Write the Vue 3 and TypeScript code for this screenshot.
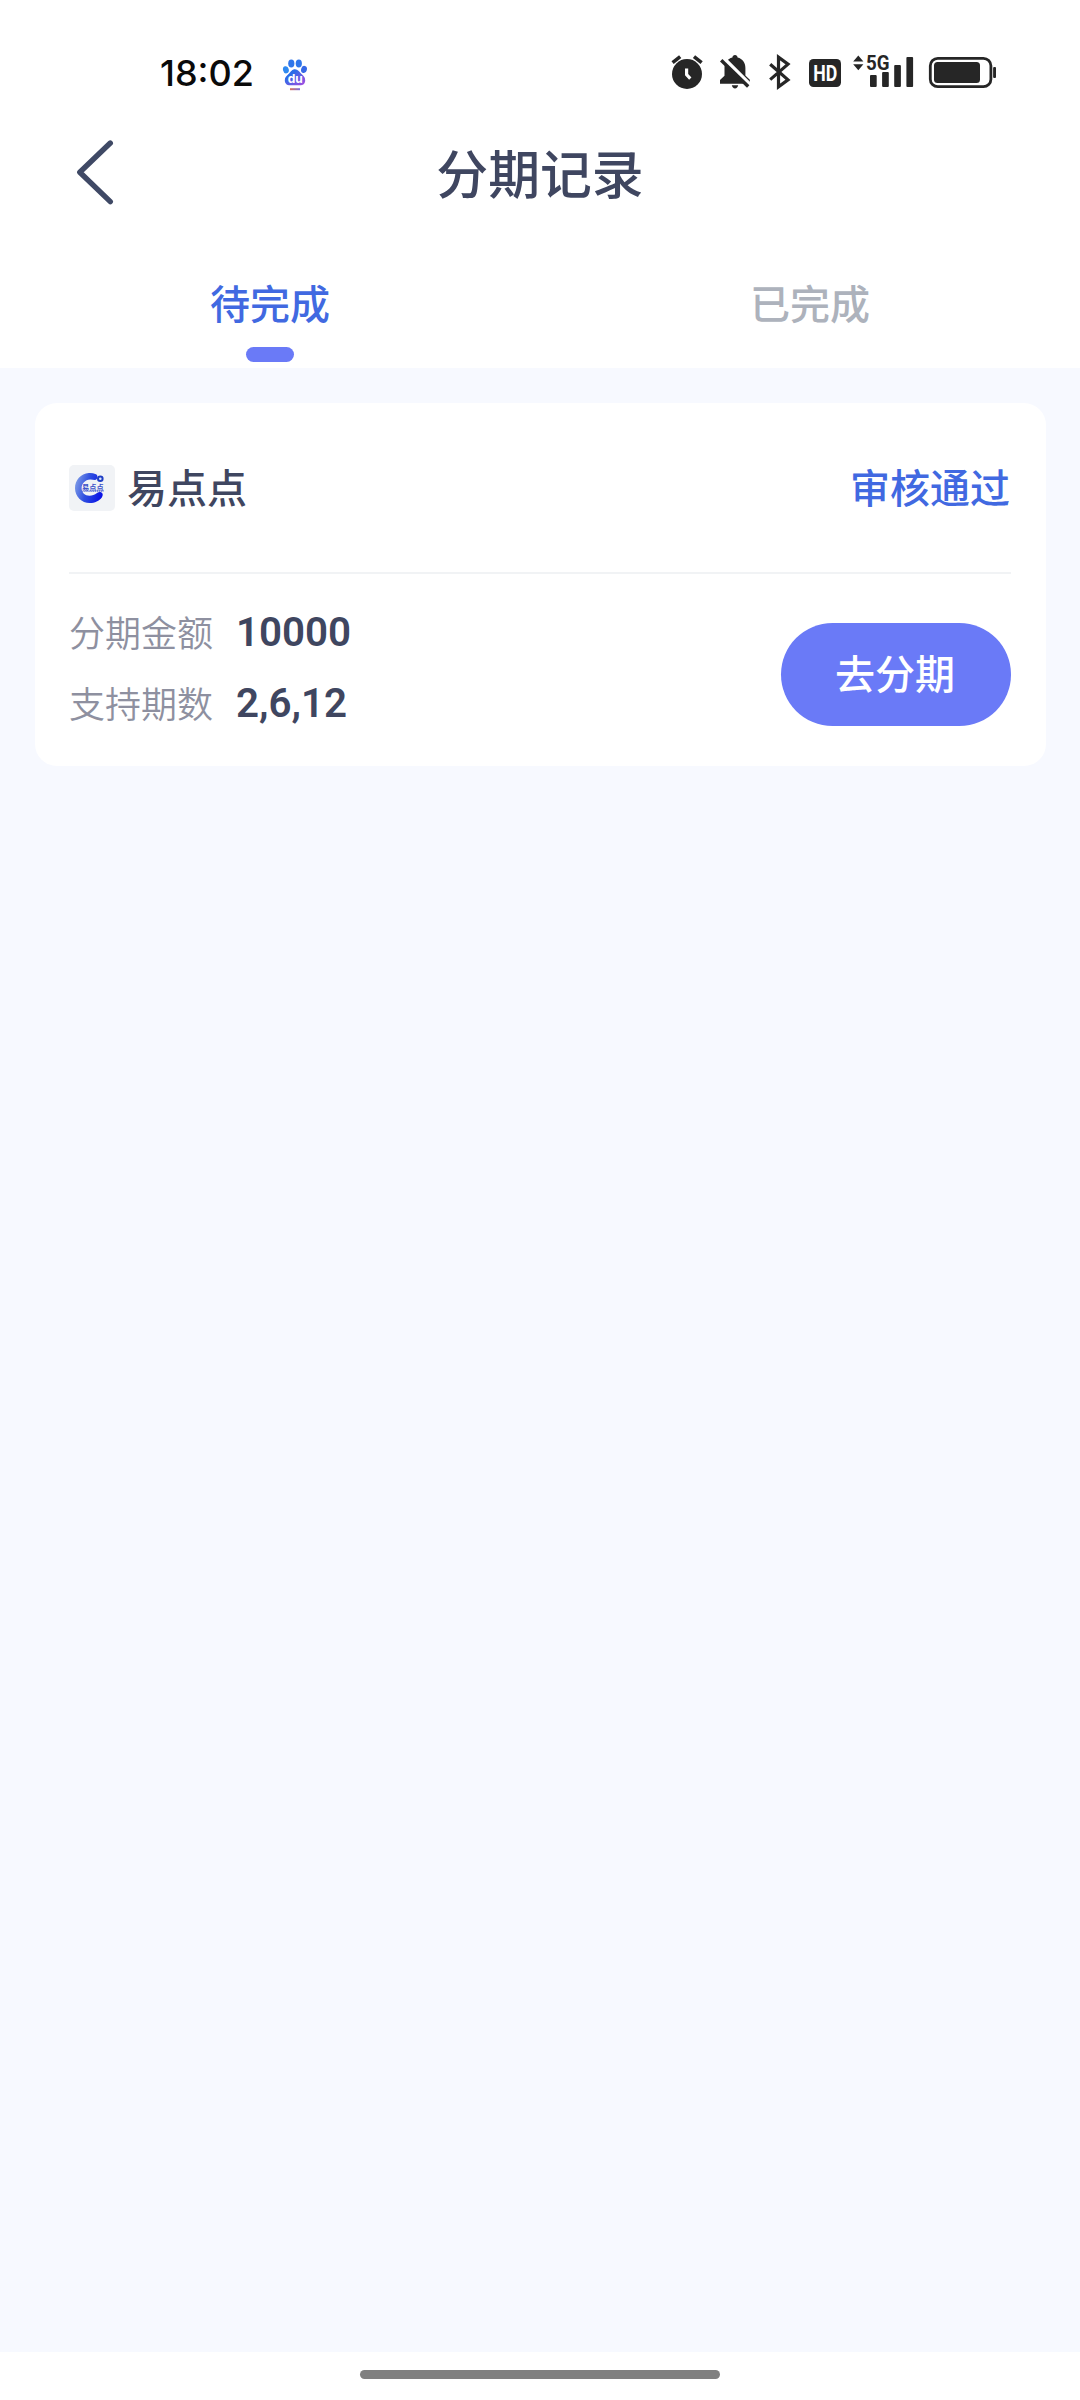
<script setup lang="ts">
import { ref } from 'vue'

interface InstallmentRecord {
  name: string
  status: string
  amount: string
  periods: string
}

const tabs: string[] = ['待完成', '已完成']
const active = ref<number>(0)
const records: InstallmentRecord[] = [
  { name: '易点点', status: '审核通过', amount: '10000', periods: '2,6,12' },
]
</script>

<template>
  <div class="screen">
    <div class="status-bar">
      <span class="clock">18:02</span>
      <svg class="paw" width="26" height="34" viewBox="282 58 26 34">
        <defs>
          <linearGradient id="pawFill" x1="0" y1="0" x2="1" y2="1">
            <stop offset="0.3" stop-color="#2b6ce8" />
            <stop offset="1" stop-color="#a94be0" />
          </linearGradient>
          <linearGradient id="pawLine" x1="0" y1="0" x2="1" y2="0">
            <stop offset="0" stop-color="#d8705c" />
            <stop offset="1" stop-color="#7a6fe0" />
          </linearGradient>
        </defs>
        <ellipse cx="291.3" cy="63.5" rx="3.100" ry="3.900" fill="#2f76ea" />
        <ellipse cx="298.8" cy="63.5" rx="3.100" ry="3.900" fill="#2f76ea" />
        <ellipse cx="285.9" cy="69.8" rx="2.900" ry="3.600" fill="#2f8af0" transform="rotate(-15 285.9 69.8)" />
        <ellipse cx="304" cy="69.4" rx="2.900" ry="3.600" fill="#3568e6" transform="rotate(15 304 69.4)" />
        <path d="M295 69.2c3 0 4.200 2.300 6 4.300 2.300 2.200 4.200 3.500 4.200 6.700 0 3.600-2.300 5.100-5.200 5.100H290c-3 0-5.200-1.700-5.200-5.100 0-3.200 2.200-4.500 4.300-6.700 1.900-2 2.900-4.300 5.900-4.300z" fill="url(#pawFill)" />
        <text x="295.2" y="83" text-anchor="middle" class="paw-text">du</text>
        <rect x="290" y="88.200" width="10" height="2" fill="url(#pawLine)" />
      </svg>
      <div class="indicators">
        <svg width="32" height="36" viewBox="671 54 32 36">
          <circle cx="687" cy="74" r="15" fill="#262626" />
          <path d="M672.600 62.600l7.600-6M701.600 62.600l-7.600-6" stroke="#262626" stroke-width="3.600" />
          <path d="M686.600 68.500v6.200l3.700 3.900" stroke="#fff" stroke-width="3.200" fill="none" />
        </svg>
        <svg width="32" height="36" viewBox="719 54 32 36">
          <path d="M735 55c1.500 0 2.500 1 2.600 2.500 5 1.300 7.800 5.300 7.800 10.500v7.500l4.400 4.300v4H720v-3.800l4.500-4.300V68c0-5.200 2.900-9.200 7.900-10.500.1-1.500 1.100-2.500 2.600-2.500z" fill="#262626" />
          <path d="M731.800 85.200h6.400c-.4 2-1.600 3.200-3.200 3.200s-2.800-1.200-3.200-3.200z" fill="#262626" />
          <path d="M723.500 58.200l27 27" stroke="#fff" stroke-width="4" />
          <path d="M721.200 60.300l27 26.200" stroke="#262626" stroke-width="3.400" />
        </svg>
        <svg width="24" height="36" viewBox="768 54 24 36">
          <path d="M770.200 64.200L788 79.800l-9.500 7V57.200l9.500 7L770.200 79.600" fill="none" stroke="#262626" stroke-width="3.200" />
        </svg>
        <svg width="34" height="36" viewBox="808 54 34 36">
          <rect x="809" y="59" width="32" height="28" rx="4.500" fill="#262626" />
          <text x="825.200" y="81" text-anchor="middle" class="hd-text" textLength="24" lengthAdjust="spacingAndGlyphs">HD</text>
        </svg>
        <svg width="62" height="36" viewBox="853 54 62 36">
          <path d="M853.200 61.500l5.100-6 5.100 6zM853.200 64.300l5.100 6 5.100-6z" fill="#262626" />
          <text x="866" y="70.200" class="net-text" textLength="23.500" lengthAdjust="spacingAndGlyphs">5G</text>
          <rect x="870" y="75" width="6.700" height="12" rx="1" fill="#262626" />
          <rect x="882.100" y="72" width="6.700" height="15" rx="1" fill="#262626" />
          <rect x="894.200" y="65" width="6.700" height="22" rx="1" fill="#262626" />
          <rect x="906.400" y="57" width="6.700" height="30" rx="1" fill="#262626" />
        </svg>
        <svg width="68" height="36" viewBox="929 54 68 36">
          <rect x="930.300" y="58.300" width="60.600" height="28.400" rx="7.500" fill="none" stroke="#262626" stroke-width="2.800" />
          <rect x="934" y="62" width="46" height="21" rx="3.500" fill="#262626" />
          <rect x="993.100" y="67" width="2.900" height="11" rx="1" fill="#262626" />
        </svg>
      </div>
    </div>

    <header class="nav">
      <svg class="back" width="40" height="70" viewBox="75 137 40 70">
        <path d="M110.300 143L79.800 172.300 110.300 201.600" fill="none" stroke="#3f4965" stroke-width="5.400" stroke-linecap="round" stroke-linejoin="round" />
      </svg>
      <h1 class="title">分期记录</h1>
    </header>

    <nav class="tabs">
      <div v-for="(tab, i) in tabs" :key="tab" class="tab" :class="{ active: i === active }" @click="active = i">
        <span class="tab-label">{{ tab }}</span>
        <i class="tab-mark"></i>
      </div>
    </nav>

    <main class="content">
      <section v-for="item in records" :key="item.name" class="card">
        <div class="card-head">
          <svg class="logo" width="46" height="46" viewBox="0 0 46 46">
            <defs>
              <linearGradient id="ringFill" x1="0" y1="0.300" x2="1" y2="0.600">
                <stop offset="0" stop-color="#7d9be6" />
                <stop offset="0.450" stop-color="#2f4fe0" />
                <stop offset="1" stop-color="#0a12e6" />
              </linearGradient>
            </defs>
            <rect width="46" height="46" rx="5" fill="#f1f3f6" />
            <path d="M27 9.200C24.500 8.200 22 7.900 19.800 8.100 11.800 8.600 6 15.200 6 23.200 6 31.600 12.600 38 20.800 38c5 0 9.500-2 12-5.500 1.500-2.200 1.200-4.500-.8-5.200-1.300-.5-2.800 0-4 .8-2.500 1.800-4.700 2.600-7.500 2.600-4.500 0-7.900-3.100-7.900-7.500 0-4.600 3.600-8.400 8.400-8.700 1.500-.1 3 .2 4.800.5 2.700.3 3.700-4.700 1.200-5.800z" fill="url(#ringFill)" />
            <circle cx="31.300" cy="13.800" r="2.300" fill="#dbe4fb" stroke="#1f3fc4" stroke-width="2" />
            <text x="13" y="24.800" class="logo-text">易点点</text>
            <path d="M13 26.200h21.500" stroke="#5b6fd8" stroke-width="1.100" stroke-dasharray="1.500 .6" />
          </svg>
          <span class="name">{{ item.name }}</span>
          <span class="status">{{ item.status }}</span>
        </div>
        <div class="card-body">
          <dl class="facts">
            <div class="fact"><dt>分期金额</dt><dd>{{ item.amount }}</dd></div>
            <div class="fact"><dt>支持期数</dt><dd>{{ item.periods }}</dd></div>
          </dl>
          <button class="action" type="button">去分期</button>
        </div>
      </section>
    </main>

    <footer class="home"><i class="home-bar"></i></footer>
  </div>
</template>

<style>
body {
  margin: 0;
  background: #fff;
}
</style>

<style scoped>
.screen {
  width: 1080px;
  height: 2400px;
  display: flex;
  flex-direction: column;
  overflow: hidden;
  background: #fff;
  font-family: Roboto, "Noto Sans CJK SC", sans-serif;
}
svg {
  display: block;
  flex: none;
  overflow: visible;
}
.status-bar {
  height: 90px;
  padding: 0 83px 0 160px;
  display: flex;
  align-items: flex-end;
  flex: none;
}
.clock {
  width: 122px;
  height: 35px;
  font: 450 36px/36px Inter, sans-serif;
  color: #0a0a0a;
}
.paw {
  margin-bottom: -2px;
}
.paw-text {
  font: 700 12px Inter, sans-serif;
  fill: #fff;
}
.indicators {
  flex: 1;
  display: flex;
  justify-content: flex-end;
}
.indicators svg + svg {
  margin-left: 16px;
}
.indicators svg:nth-child(3) {
  margin-left: 17px;
}
.indicators svg:nth-child(5) {
  margin-left: 11px;
}
.indicators svg:nth-child(6) {
  margin-left: 14px;
}
.hd-text {
  font: 700 22.500px Roboto, sans-serif;
  fill: #fff;
}
.net-text {
  font: 700 20px Roboto, sans-serif;
  fill: #262626;
}
.nav {
  height: 168px;
  display: flex;
  flex: none;
  padding: 0 75px;
}
.back {
  margin-top: 47px;
}
.title {
  flex: 1;
  margin: 49px 40px 0 0;
  height: 76px;
  font-size: 51.840px;
  line-height: 76px;
  font-weight: 500;
  text-align: center;
  color: #3f4660;
}
.tabs {
  height: 110px;
  display: flex;
  flex: none;
}
.tab {
  flex: 1;
  display: flex;
  flex-direction: column;
  align-items: center;
  padding-top: 18px;
  color: #adb2bc;
}
.tab-label {
  height: 60px;
  font-size: 40px;
  line-height: 60px;
  font-weight: 500;
}
.tab-mark {
  width: 48px;
  height: 15px;
  margin-top: 11px;
  border-radius: 7.500px;
}
.tab.active {
  color: #4169e1;
}
.tab.active .tab-mark {
  background: #6a7af7;
}
.content {
  flex: 1;
  padding: 35px 34.500px;
  background: #f7f9ff;
}
.card {
  height: 363px;
  padding: 0 34.500px;
  border-radius: 22px;
  background: #fff;
}
.card-head {
  height: 169px;
  display: flex;
  align-items: center;
  border-bottom: 2px solid #f1f3f5;
  font-size: 40px;
  line-height: 60px;
  font-weight: 500;
}
.logo-text {
  font: 700 7.200px "Noto Sans CJK SC", sans-serif;
  fill: #3a50c8;
}
.name {
  margin-left: 12px;
  padding-top: 4px;
  color: #3f4660;
}
.status {
  margin-left: auto;
  padding: 4px 1px 0 0;
  color: #4169e1;
}
.card-body {
  display: flex;
  justify-content: space-between;
}
.facts {
  margin: 23px 0 0;
}
.fact {
  height: 71px;
  display: flex;
}
dt {
  width: 167px;
  padding-top: 3px;
  font-size: 36px;
  line-height: 71px;
  font-weight: 350;
  color: #8e90a0;
}
dd {
  margin: 0;
  font-size: 40.320px;
  line-height: 71px;
  font-weight: 600;
  color: #3f4660;
}
.action {
  width: 230px;
  height: 103px;
  margin: 49px 0 0;
  padding: 2px 2px 0 0;
  border: 0;
  border-radius: 52px;
  background: #6a7af7;
  color: #fff;
  font: 500 40px/101px Roboto, "Noto Sans CJK SC", sans-serif;
}
.home {
  height: 48px;
  display: flex;
  flex: none;
  justify-content: center;
}
.home-bar {
  width: 360px;
  height: 9px;
  margin-top: 18px;
  border-radius: 5px;
  background: #808080;
}
</style>
